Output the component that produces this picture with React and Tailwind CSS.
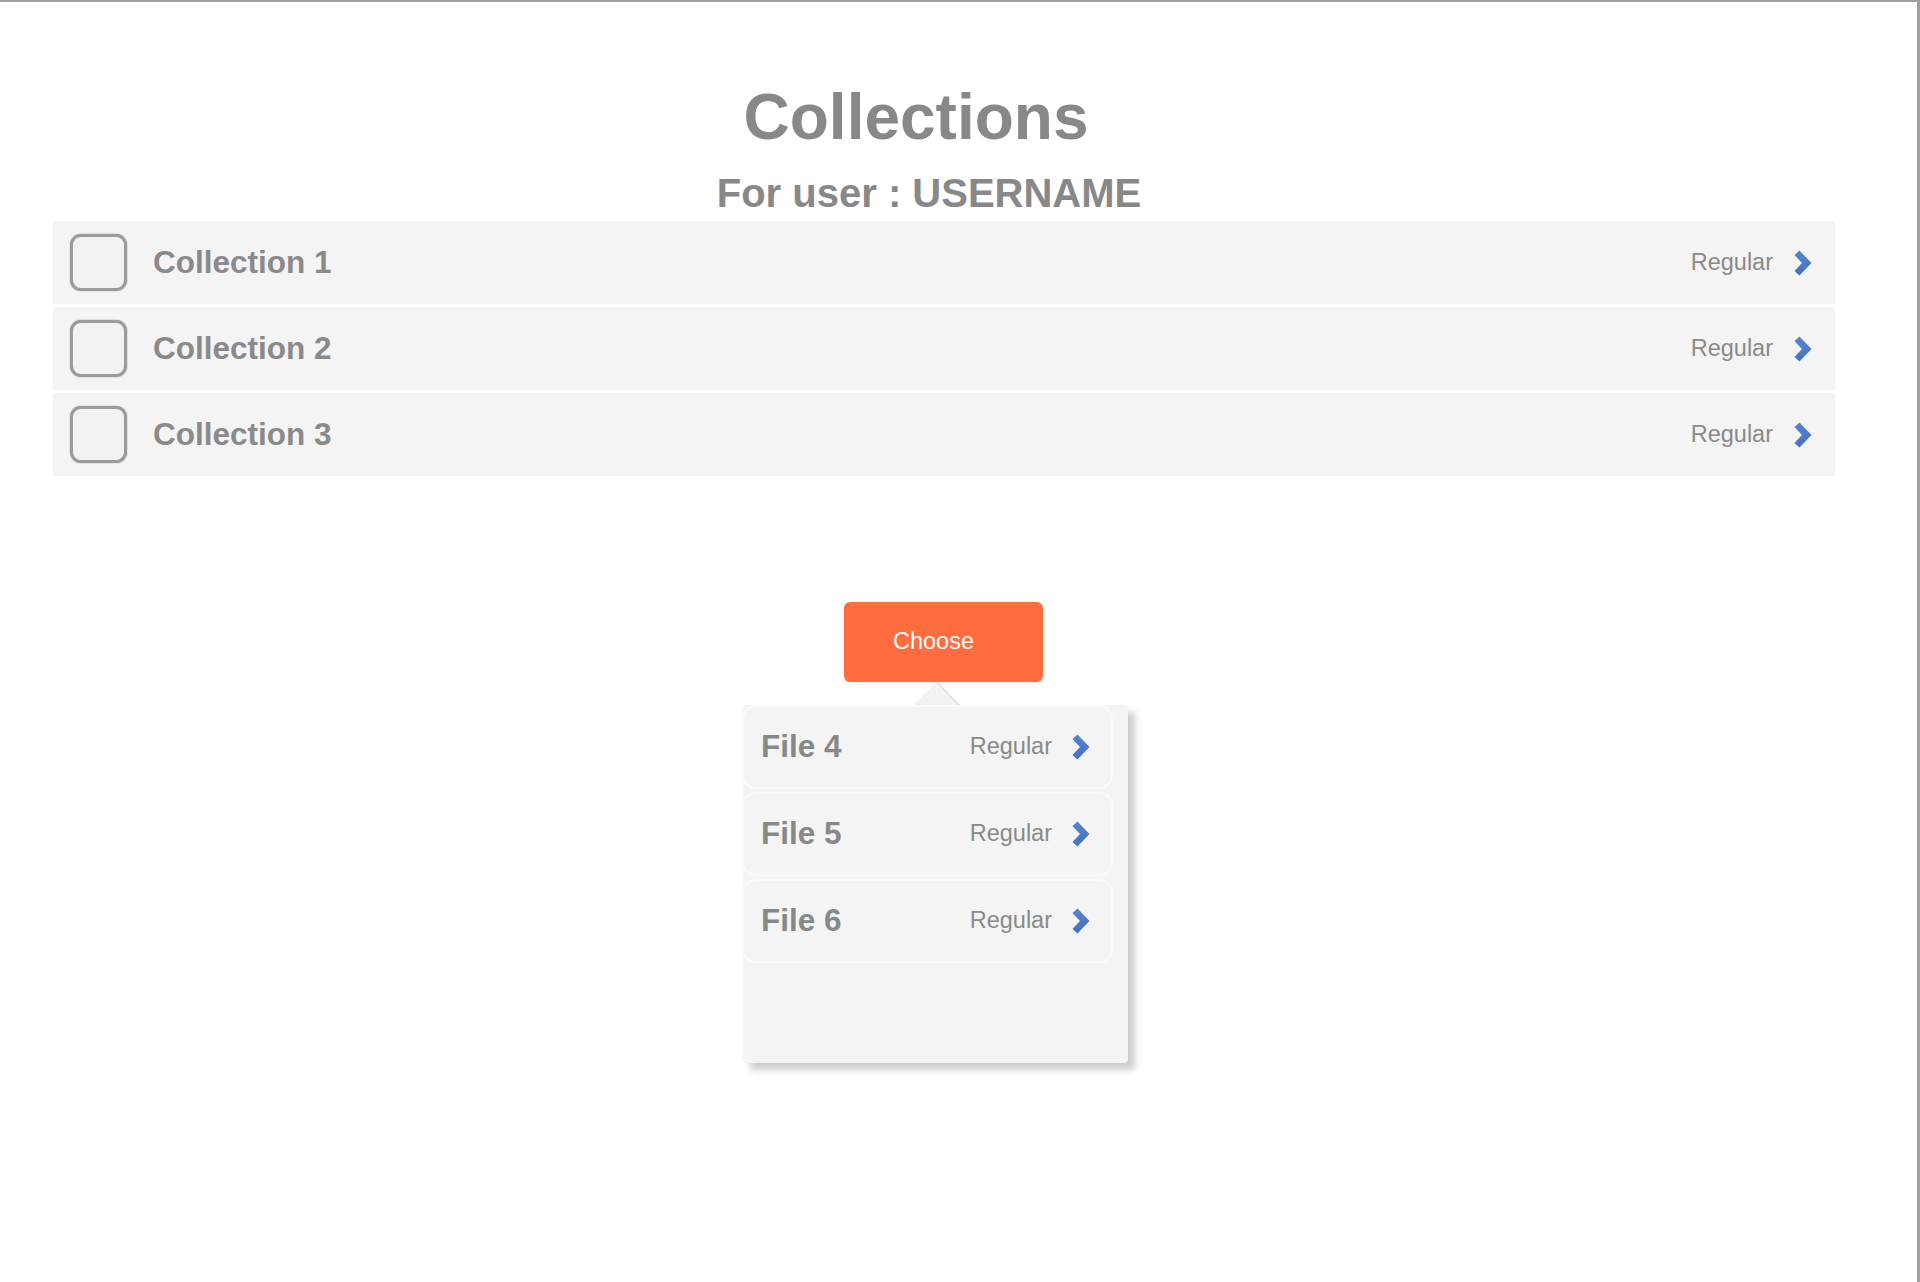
import React from 'react';

const collections = ['Collection 1', 'Collection 2', 'Collection 3'];
const files = ['File 4', 'File 5', 'File 6'];

// blue chevron used at the end of every row
const Chevron = ({ className = '' }) => (
  <svg width="18" height="26" viewBox="0 0 18 26" className={className}>
    <defs>
      <linearGradient id="chev" x1="0" y1="0" x2="0" y2="1">
        <stop offset="0" stopColor="#5585d0" />
        <stop offset="1" stopColor="#4372bf" />
      </linearGradient>
    </defs>
    <polygon points="0.5,5 5.5,0.5 17.5,13 5.5,25.5 0.5,21 8,13" fill="url(#chev)" />
  </svg>
);

const CollectionRow = ({ label }) => (
  <div className="flex h-[83px] items-center bg-[#f4f4f4]">
    <div className="ml-[17px] h-[57px] w-[57px] rounded-[11px] border-[3px] border-[#9b9b9b] bg-[#f2f2f2] shadow-[0_0_1.5px_rgba(0,0,0,0.4)]" />
    <span className="ml-[26px] text-[31.5px] font-bold text-[#8a8a8a]">{label}</span>
    <span className="ml-auto text-[23.5px] text-[#8a8a8a]">Regular</span>
    <Chevron className="ml-[21px] mr-[23px]" />
  </div>
);

const FileRow = ({ label }) => (
  <div className="flex h-[84px] items-center rounded-[14px] border-2 border-[#fafafa] bg-[#f4f4f4]">
    <span className="ml-[17px] text-[31.5px] font-bold text-[#888888]">{label}</span>
    <span className="ml-auto text-[23.5px] text-[#8a8a8a]">Regular</span>
    <Chevron className="ml-[20px] mr-[21px]" />
  </div>
);

export default function App() {
  return (
    <div
      className="h-[1282px] w-[1920px] overflow-hidden border-t-2 border-r-[3px] border-[#a0a0a0] bg-white"
      style={{ fontFamily: '"Liberation Sans", Arial, sans-serif' }}
    >
      <div className="pt-[83px]">
        <h1 className="pr-[85px] text-center text-[64px] font-bold leading-[64px] text-[#888888]">Collections</h1>
        <h2 className="mt-[24px] pr-[59px] text-center text-[40px] font-bold leading-[40px] text-[#888888]">
          For user : USERNAME
        </h2>
      </div>

      {/* collection list */}
      <div className="ml-[53px] mt-[8px] flex w-[1782px] flex-col gap-[3px]">
        {collections.map((c) => (
          <CollectionRow key={c} label={c} />
        ))}
      </div>

      {/* choose button + popover */}
      <div className="mt-[126px]">
        <button className="ml-[844px] flex h-[80px] w-[199px] items-center rounded-[6px] bg-[#ff6c3e] pl-[49px] text-[23.5px] text-white">
          Choose
        </button>

        <div className="relative ml-[743px] mt-[23px] h-[358px] w-[385px] rounded-[4px] bg-[#f4f4f4] shadow-[7px_7px_7px_rgba(0,0,0,0.2)]">
          <svg width="46" height="25" viewBox="0 0 46 25" className="absolute left-[171px] top-[-24px]">
            <polygon points="0,25 23,1 46,25" fill="#f2f2f2" />
            <polyline points="23,1 46,25" fill="none" stroke="#dedede" strokeWidth="1.5" />
            <polyline points="0,25 23,1" fill="none" stroke="#ececec" strokeWidth="1" />
          </svg>
          <div className="flex w-[371px] -translate-x-px flex-col gap-[3px]">
            {files.map((f) => (
              <FileRow key={f} label={f} />
            ))}
          </div>
        </div>
      </div>
    </div>
  );
}
